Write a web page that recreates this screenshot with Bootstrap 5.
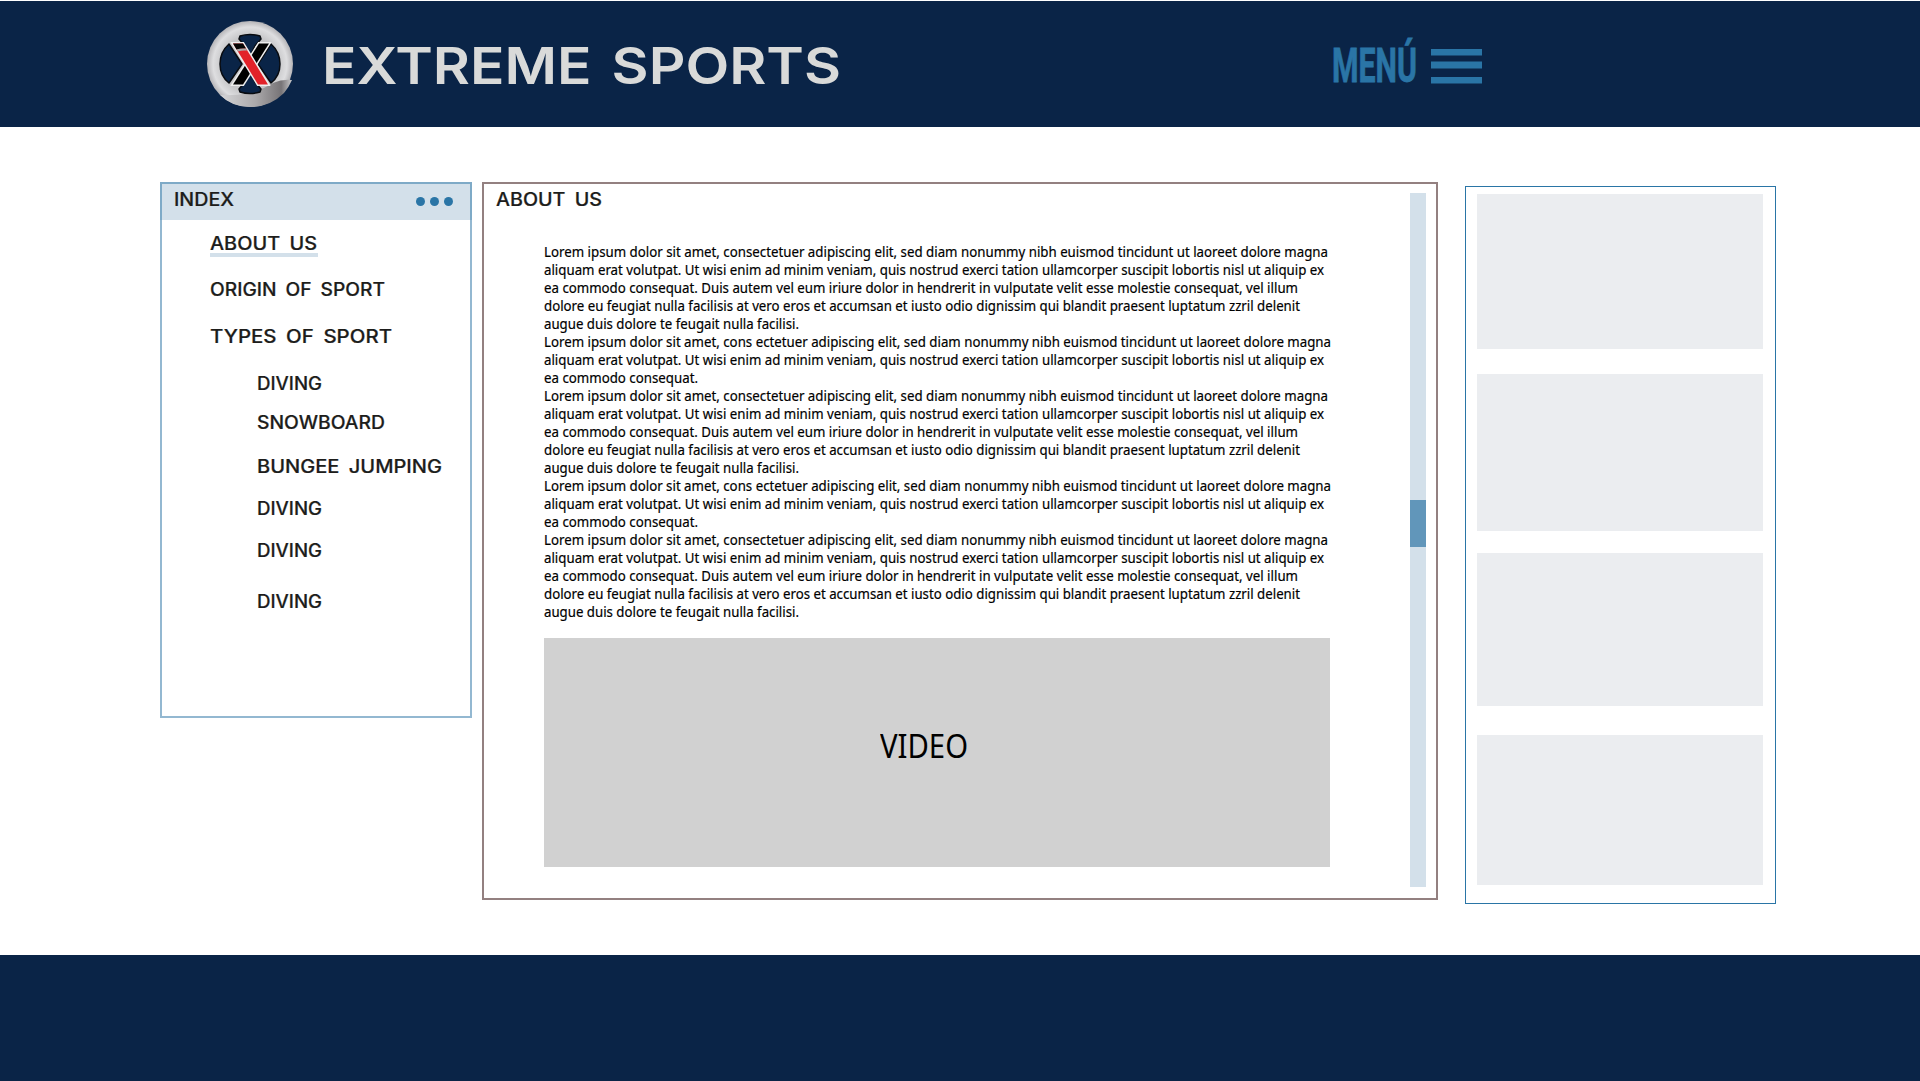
<!DOCTYPE html>
<html lang="en">
<head>
<meta charset="utf-8">
<title>Extreme Sports</title>
<link rel="stylesheet" href="https://cdn.jsdelivr.net/npm/bootstrap@5.3.0/dist/css/bootstrap.min.css">
<style>
body{font-family:"Noto Sans","Open Sans",sans-serif;color:#000;background:#fff;width:1920px;height:1081px;overflow:hidden}
.fit{display:inline-block;white-space:nowrap;transform-origin:0 50%}
.top-bar{height:126px;margin-top:1px;background:#0a2447;padding:0 438px 0 206px}
.emblem{width:88px;height:88px;margin-bottom:1px}
.brand-name{font:600 51px/60px Inter,sans-serif;color:#d9dad9;width:520px;margin:4px 0 0 28px;word-spacing:.1em}
.menu-btn{color:#2a75a6;margin-top:4px}
.menu-word{font:700 49px/56px Roboto,sans-serif;width:99px;-webkit-text-stroke:.8px #2a75a6}
.stage{height:828px;padding:56px 0 0 160px}
.display-cap{font:500 18px/22px Inter,sans-serif;color:#1d1d1b;height:20px;word-spacing:.2em;-webkit-text-stroke:.2px #1d1d1b}
.index-panel{width:312px;height:536px;margin-top:-1px;border:2px solid #93b8d1}
.index-head{height:38px;margin:-2px -2px 0;border:2px solid #7eaac7;border-bottom:0;background:#d3e0ea;padding:5px 17px 0 12px}
.dots{margin-top:8px}
.index-list{padding:13px 0 0 48px}
.index-list ul{padding-left:47px}
.g19{margin-top:19px}.g22{margin-top:22px}.g24{margin-top:24px}.g26{margin-top:26px}.g27{margin-top:27px}.g31{margin-top:31px}
.here{width:108px;height:24px;border-bottom:4px solid #d3e0ea;margin-bottom:-4px}
.article-panel{width:956px;height:718px;margin:-1px 0 0 10px;border:2px solid #938080;padding:9px 10px 11px 12px}
.article-body{width:850px}
.article-head{height:20px;margin-top:-4px}
.copy{padding:33px 0 0 48px;font-size:15px;line-height:18px;height:430px;-webkit-text-stroke:.2px #000}
.copy div{height:18px}
.clip{width:786px;height:229px;margin:-1px 0 0 48px;background:#d1d1d1;font-size:32px;line-height:40px;padding:88px 0 0 336px}
.rail{width:16px;height:694px;background:#d3e0ea;padding-top:307px}
.thumb{height:47px;background:#6196ba}
.side-panel{width:311px;height:718px;margin:3px 0 0 27px;border:1px solid #2a75a6;padding:7px 12px 0 11px}
.slot{background:#ebedf0}
.bottom-bar{height:126px;background:#0a2447}
</style>
<script src="https://cdn.jsdelivr.net/npm/bootstrap@5.3.0/dist/js/bootstrap.bundle.min.js"></script>
</head>
<body>
<header class="top-bar d-flex align-items-center">
  <svg class="emblem flex-shrink-0" viewBox="0 0 88 88">
    <defs>
      <radialGradient id="silver" cx=".5" cy=".5" r=".5"><stop offset=".65" stop-color="#c6c6c8"/><stop offset=".86" stop-color="#dedee0"/><stop offset="1" stop-color="#b5b4b7"/></radialGradient>
      <linearGradient id="shade" x1="0" x2="1"><stop offset="0" stop-color="#d6d6d8"/><stop offset=".5" stop-color="#aaa8aa"/><stop offset=".85" stop-color="#777477"/><stop offset="1" stop-color="#c9c9cb"/></linearGradient>
    </defs>
    <circle cx="44" cy="44" r="43" fill="url(#silver)"/>
    <path d="M14 75Q27 76 43 73Q58 69 67 63Q76 59 86 60Q83 67 78 73Q64 87 44 87Q26 87 14 75Z" fill="url(#shade)"/>
    <g fill="#0a2447" stroke="#080b10" stroke-width="1.5" stroke-linejoin="round">
      <path d="M34 16Q44 13 54 16L55 19L49 26L44 36L39 26L33 19Z"/>
      <path d="M34 72Q44 75 54 72L55 69L49 62L44 52L39 62L33 69Z"/>
      <path d="M23 24Q14 32 14 44Q14 56 23 63L36 44Z"/>
      <path d="M65 24Q74 32 74 44Q74 56 65 63L52 44Z"/>
    </g>
    <path d="M53 23.5H63L37 64.500H27Z" fill="#000" stroke="#eee" stroke-width="3" paint-order="stroke"/>
    <path d="M27 23.5H37L62 64.500H52Z" fill="#e22229" stroke="#eee" stroke-width="3" paint-order="stroke"/>
    <path d="M27 23.5H37L40 28.500Q34 28.500 30.500 29.500Z" fill="#050505"/>
    <path d="M30.500 29.500Q34 28 40 28.500L41 30.500Q36 30 32 31.500Z" fill="#aaa"/>
  </svg>
  <div class="brand-name"><span class="fit" data-w="519">EXTREME SPORTS</span></div>
  <div class="menu-btn d-flex align-items-center ms-auto">
    <div class="menu-word"><span class="fit" data-w="85">MENÚ</span></div>
    <svg width="51" height="35" viewBox="0 0 51 35" fill="#2a75a6"><path d="M0 0H51V6.500H0ZM0 12.500H51V19.500H0ZM0 28H51V34.500H0Z"/></svg>
  </div>
</header>
<main class="stage d-flex align-items-start">
  <aside class="index-panel flex-shrink-0">
    <div class="index-head d-flex justify-content-between">
      <div class="display-cap"><span class="fit" data-w="60">INDEX</span></div>
      <svg class="dots" width="38" height="10" viewBox="0 0 38 10" fill="#2a75a6"><circle cx="5.500" cy="4.500" r="4.500"/><circle cx="19.500" cy="4.500" r="4.500"/><circle cx="33.500" cy="4.500" r="4.500"/></svg>
    </div>
    <nav class="index-list">
      <div class="display-cap here"><span class="fit" data-w="107">ABOUT US</span></div>
      <div class="display-cap g26"><span class="fit" data-w="175">ORIGIN OF SPORT</span></div>
      <div class="display-cap g27"><span class="fit" data-w="182">TYPES OF SPORT</span></div>
      <ul class="list-unstyled mb-0">
        <li class="display-cap g27"><span class="fit" data-w="65">DIVING</span></li>
        <li class="display-cap g19"><span class="fit" data-w="128">SNOWBOARD</span></li>
        <li class="display-cap g24"><span class="fit" data-w="185">BUNGEE JUMPING</span></li>
        <li class="display-cap g22"><span class="fit" data-w="65">DIVING</span></li>
        <li class="display-cap g22"><span class="fit" data-w="65">DIVING</span></li>
        <li class="display-cap g31"><span class="fit" data-w="65">DIVING</span></li>
      </ul>
    </nav>
  </aside>
  <section class="article-panel d-flex justify-content-between flex-shrink-0">
    <div class="article-body flex-shrink-0">
      <div class="display-cap article-head"><span class="fit" data-w="106">ABOUT US</span></div>
      <div class="copy" id="copy"></div>
      <div class="clip"><span class="fit" data-w="88">VIDEO</span></div>
    </div>
    <div class="rail flex-shrink-0"><div class="thumb"></div></div>
  </section>
  <aside class="side-panel flex-shrink-0">
    <div class="slot" style="height:155px"></div>
    <div class="slot" style="height:157px;margin-top:25px"></div>
    <div class="slot" style="height:153px;margin-top:22px"></div>
    <div class="slot" style="height:150px;margin-top:29px"></div>
  </aside>
</main>
<footer class="bottom-bar"></footer>
<script>
const full = [
  ["Lorem ipsum dolor sit amet, consectetuer adipiscing elit, sed diam nonummy nibh euismod tincidunt ut laoreet dolore magna", 784],
  ["aliquam erat volutpat. Ut wisi enim ad minim veniam, quis nostrud exerci tation ullamcorper suscipit lobortis nisl ut aliquip ex", 780],
  ["ea commodo consequat. Duis autem vel eum iriure dolor in hendrerit in vulputate velit esse molestie consequat, vel illum", 754],
  ["dolore eu feugiat nulla facilisis at vero eros et accumsan et iusto odio dignissim qui blandit praesent luptatum zzril delenit", 756],
  ["augue duis dolore te feugait nulla facilisi.", 255]
];
const brief = [
  ["Lorem ipsum dolor sit amet, cons ectetuer adipiscing elit, sed diam nonummy nibh euismod tincidunt ut laoreet dolore magna", 787],
  full[1],
  ["ea commodo consequat.", 154]
];
document.getElementById("copy").innerHTML = [...full, ...brief, ...full, ...brief, ...full]
  .map(([t, w]) => `<div><span class="fit" data-w="${w}">${t}</span></div>`).join("");
// Stretch or condense each line to its measure
document.querySelectorAll(".fit").forEach(e => {
  e.style.transform = `scaleX(${e.dataset.w / e.getBoundingClientRect().width})`;
});
</script>
</body>
</html>
